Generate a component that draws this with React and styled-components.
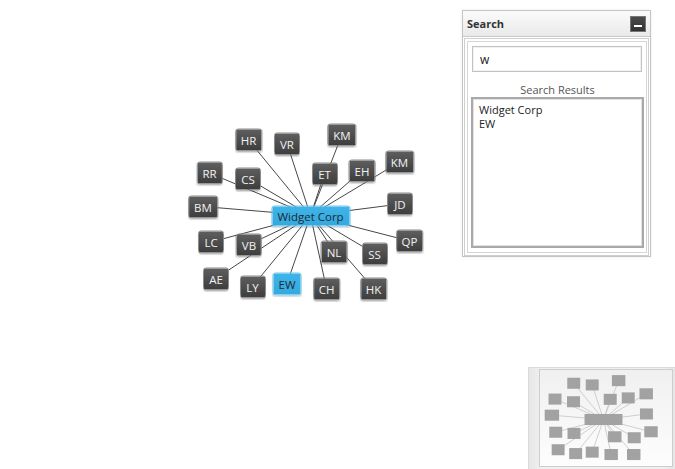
import React from 'react';
import styled, { createGlobalStyle } from 'styled-components';

const GlobalStyle = createGlobalStyle`
    html, body {
        margin: 0;
        padding: 0;
        background: #fff;
    }
    body {
        font-family: "Open Sans", "Noto Sans", sans-serif;
    }
`

// graph data: centers on the canvas
const hub = { id: 'hub', label: 'Widget Corp', x: 310.5, y: 215.5, w: 79 };

const nodes = [
    { id: 'hr', label: 'HR', x: 248.5, y: 140 },
    { id: 'vr', label: 'VR', x: 287, y: 143.5 },
    { id: 'km1', label: 'KM', x: 342, y: 134.5, w: 28 },
    { id: 'rr', label: 'RR', x: 209.5, y: 173 },
    { id: 'cs', label: 'CS', x: 248, y: 178.5 },
    { id: 'et', label: 'ET', x: 324.5, y: 173.5 },
    { id: 'eh', label: 'EH', x: 362, y: 170.5 },
    { id: 'km2', label: 'KM', x: 399.5, y: 162, w: 28 },
    { id: 'bm', label: 'BM', x: 203, y: 206.5, w: 30 },
    { id: 'jd', label: 'JD', x: 400, y: 204 },
    { id: 'lc', label: 'LC', x: 211, y: 242 },
    { id: 'vb', label: 'VB', x: 249, y: 244.5 },
    { id: 'nl', label: 'NL', x: 334, y: 251.5, w: 28 },
    { id: 'ss', label: 'SS', x: 374.5, y: 253.5 },
    { id: 'qp', label: 'QP', x: 409.5, y: 241, w: 28 },
    { id: 'ae', label: 'AE', x: 216, y: 278.5 },
    { id: 'ly', label: 'LY', x: 252.5, y: 286.5 },
    { id: 'ew', label: 'EW', x: 287, y: 283.5, active: true },
    { id: 'ch', label: 'CH', x: 326.5, y: 288.5, w: 28 },
    { id: 'hk', label: 'HK', x: 373.5, y: 288.5, w: 28 },
];

const results = ['Widget Corp', 'EW'];

// minimap frame: 539..671 x 369..465
const MINI = { ox: 539, oy: 369, cx: 602.5, cy: 418.5, k: 0.48 };
const mx = (x) => MINI.cx - MINI.ox + (x - hub.x) * MINI.k;
const my = (y) => MINI.cy - MINI.oy + (y - hub.y) * MINI.k;

const App = () =>
{
    return (
        <>
            <GlobalStyle />
            <Canvas>
                <Edges width="675" height="469">
                    {nodes.map(n => (
                        <line key={n.id} x1={hub.x} y1={hub.y} x2={n.x} y2={n.y} />
                    ))}
                </Edges>
                {nodes.map(n => (
                    <Node key={n.id} $active={n.active} style={{ left: n.x, top: n.y }}>
                        {n.label}
                    </Node>
                ))}
                <Node $active $hub style={{ left: hub.x, top: hub.y }}>{hub.label}</Node>

                <SearchPanel>
                    <PanelHeader>
                        <PanelTitle>Search</PanelTitle>
                        <MinButton><span /></MinButton>
                    </PanelHeader>
                    <PanelBody>
                        <PanelInner>
                            <SearchInput defaultValue="w" />
                            <ResultsLabel>Search Results</ResultsLabel>
                            <ResultsList>
                                {results.map(r => <ResultItem key={r}>{r}</ResultItem>)}
                            </ResultsList>
                        </PanelInner>
                    </PanelBody>
                </SearchPanel>

                <Minimap>
                    <MiniFrame>
                        <svg width="132" height="96">
                            {nodes.map(n => (
                                <line key={n.id} x1={mx(hub.x)} y1={my(hub.y)} x2={mx(n.x)} y2={my(n.y)}
                                    stroke="#c4c4c4" strokeWidth="0.8" />
                            ))}
                            {[...nodes, hub].map(n => {
                                const w = (n.w || 27) * MINI.k;
                                const h = 23 * MINI.k;
                                return (
                                    <rect key={n.id} x={mx(n.x) - w / 2} y={my(n.y) - h / 2}
                                        width={w} height={h} fill="#a2a2a2" />
                                );
                            })}
                        </svg>
                    </MiniFrame>
                </Minimap>
            </Canvas>
        </>
    );
}

const Canvas = styled.div`
    position: relative;
    width: 100vw;
    height: 100vh;
    overflow: hidden;
    background: #fff;
`

const Edges = styled.svg`
    position: absolute;
    left: 0;
    top: 0;
    & line {
        stroke: #474747;
        stroke-width: 1;
    }
`

const Node = styled.div`
    position: absolute;
    transform: translate(-50%, -50%);
    min-width: ${p => p.$hub ? '79px' : '26px'};
    height: ${p => p.$hub ? '21px' : '23px'};
    padding: 0 5px;
    box-sizing: border-box;
    display: flex;
    align-items: center;
    justify-content: center;
    border-radius: 3px;
    font-size: 11.5px;
    white-space: nowrap;
    color: ${p => p.$active ? '#1f2a30' : '#f2f2f2'};
    background: ${p => p.$active
        ? 'linear-gradient(#3fb4e8, #33a9df)'
        : 'linear-gradient(#5e5e5e, #3d3d3d)'};
    border: 1px solid ${p => p.$active ? '#6cc7ef' : '#8c8c8c'};
    box-shadow: 0 1px 1px rgba(0,0,0,0.15);
`

const SearchPanel = styled.div`
    position: absolute;
    left: 462px;
    top: 10px;
    width: 189px;
    height: 247px;
    box-sizing: border-box;
    border: 1px solid #c4c4c4;
    background: #fff;
    display: flex;
    flex-direction: column;
    box-shadow: 0 0 3px rgba(0,0,0,0.08);
`

const PanelHeader = styled.div`
    height: 25px;
    flex: none;
    display: flex;
    align-items: center;
    justify-content: space-between;
    padding: 0 4px 0 4px;
    border-bottom: 1px solid #c9c9c9;
    background: linear-gradient(#fbfbfb, #e9e9e9);
`

const PanelTitle = styled.span`
    font-size: 11px;
    font-weight: 700;
    color: #333;
`

const MinButton = styled.div`
    width: 16px;
    height: 16px;
    box-sizing: border-box;
    background: linear-gradient(#4a4a4a, #333);
    border: 1px solid #777;
    display: flex;
    align-items: flex-end;
    justify-content: center;
    padding-bottom: 4px;
    & span {
        display: block;
        width: 8px;
        height: 2px;
        background: #fff;
    }
`

const PanelBody = styled.div`
    flex: 1;
    display: flex;
    margin: 1px 1px 0 1px;
    padding: 2px;
    border: 1px solid #cfcfcf;
`

const PanelInner = styled.div`
    flex: 1;
    display: flex;
    flex-direction: column;
    border: 1px solid #d6d6d6;
    padding: 4px 2px 4px 3px;
`

const SearchInput = styled.input`
    height: 26px;
    flex: none;
    margin: 0 2px 0 1px;
    box-sizing: border-box;
    border: 1px solid #c2c2c2;
    box-shadow: inset 0 0 0 1px #edf2f7;
    padding: 0 7px;
    font-family: "Open Sans", sans-serif;
    font-size: 12px;
    color: #222;
    outline: none;
`

const ResultsLabel = styled.div`
    margin-top: 11px;
    line-height: 14px;
    text-align: center;
    font-size: 11px;
    color: #555;
`

const ResultsList = styled.div`
    flex: 1;
    border: 2px solid #a9a9a9;
    box-shadow: inset 0 0 0 1px #e2e2e2;
    padding: 4px 6px;
`

const ResultItem = styled.div`
    font-size: 11px;
    line-height: 14px;
    color: #222;
`

const Minimap = styled.div`
    position: absolute;
    left: 528px;
    top: 367px;
    right: 0;
    bottom: 0;
    background: linear-gradient(90deg, #e6e6e6, #f0f0f0 8%, #f0f0f0 92%, #e6e6e6);
    border-left: 1px solid #dadada;
    border-top: 1px solid #dadada;
    padding: 1px 3px 3px 10px;
    display: flex;
`

const MiniFrame = styled.div`
    width: 132px;
    height: 96px;
    border: 1px solid #cdcdcd;
    background: linear-gradient(#f0f0f0, #fdfdfd);
`

export default App;
